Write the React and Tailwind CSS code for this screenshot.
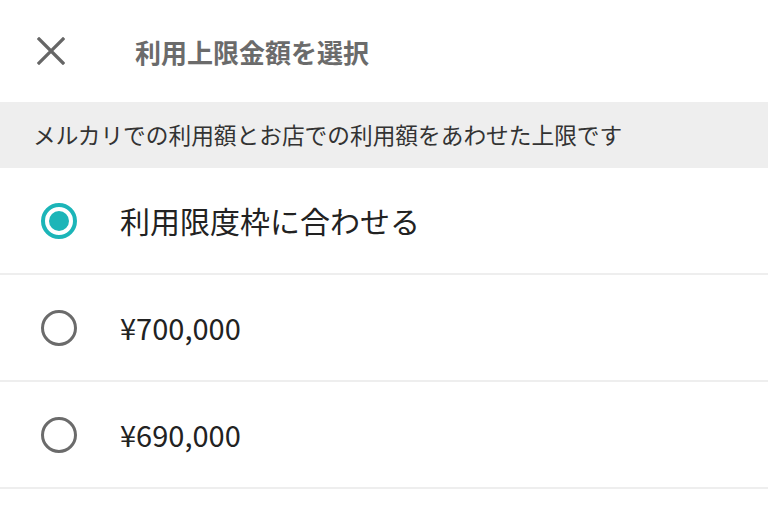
import React from "react";

const font = { fontFamily: '"Noto Sans CJK JP", "Noto Sans", sans-serif' };

function Radio({ checked }) {
  if (checked) {
    return (
      <div className="w-[36px] h-[36px] rounded-full border-[4px] border-[#1cb5b8] flex items-center justify-center">
        <div className="w-[20px] h-[20px] rounded-full bg-[#1cb5b8]" />
      </div>
    );
  }
  return <div className="w-[36px] h-[36px] rounded-full border-[3px] border-[#6b6b6b]" />;
}

function Row({ checked, label, big }) {
  return (
    <div className="h-[107px] flex items-center border-b-2 border-[#eeeeee]">
      <div className="w-[120px] flex justify-center pr-[2px]">
        <Radio checked={checked} />
      </div>
      <span className={big ? "text-[30px] text-[#222222]" : "text-[29px] text-[#222222]"}>{label}</span>
    </div>
  );
}

export default function App() {
  return (
    <div className="w-[768px] h-[512px] bg-white overflow-hidden" style={font}>
      <div className="h-[102px] flex items-center">
        <div className="w-[104px] flex justify-center pr-[2px]">
          <svg width="28" height="28" viewBox="0 0 28 28">
            <path d="M2 2 L26 26 M26 2 L2 26" stroke="#666666" strokeWidth="3.2" strokeLinecap="square" />
          </svg>
        </div>
        <div className="pl-[31px] text-[26px] font-bold text-[#6b6b6b]">利用上限金額を選択</div>
      </div>
      <div className="h-[66px] bg-[#eeeeee] flex items-center pl-[33px] text-[22.7px] text-[#333333]">
        メルカリでの利用額とお店での利用額をあわせた上限です
      </div>
      <Row checked label="利用限度枠に合わせる" big />
      <Row label="¥700,000" />
      <Row label="¥690,000" />
    </div>
  );
}
